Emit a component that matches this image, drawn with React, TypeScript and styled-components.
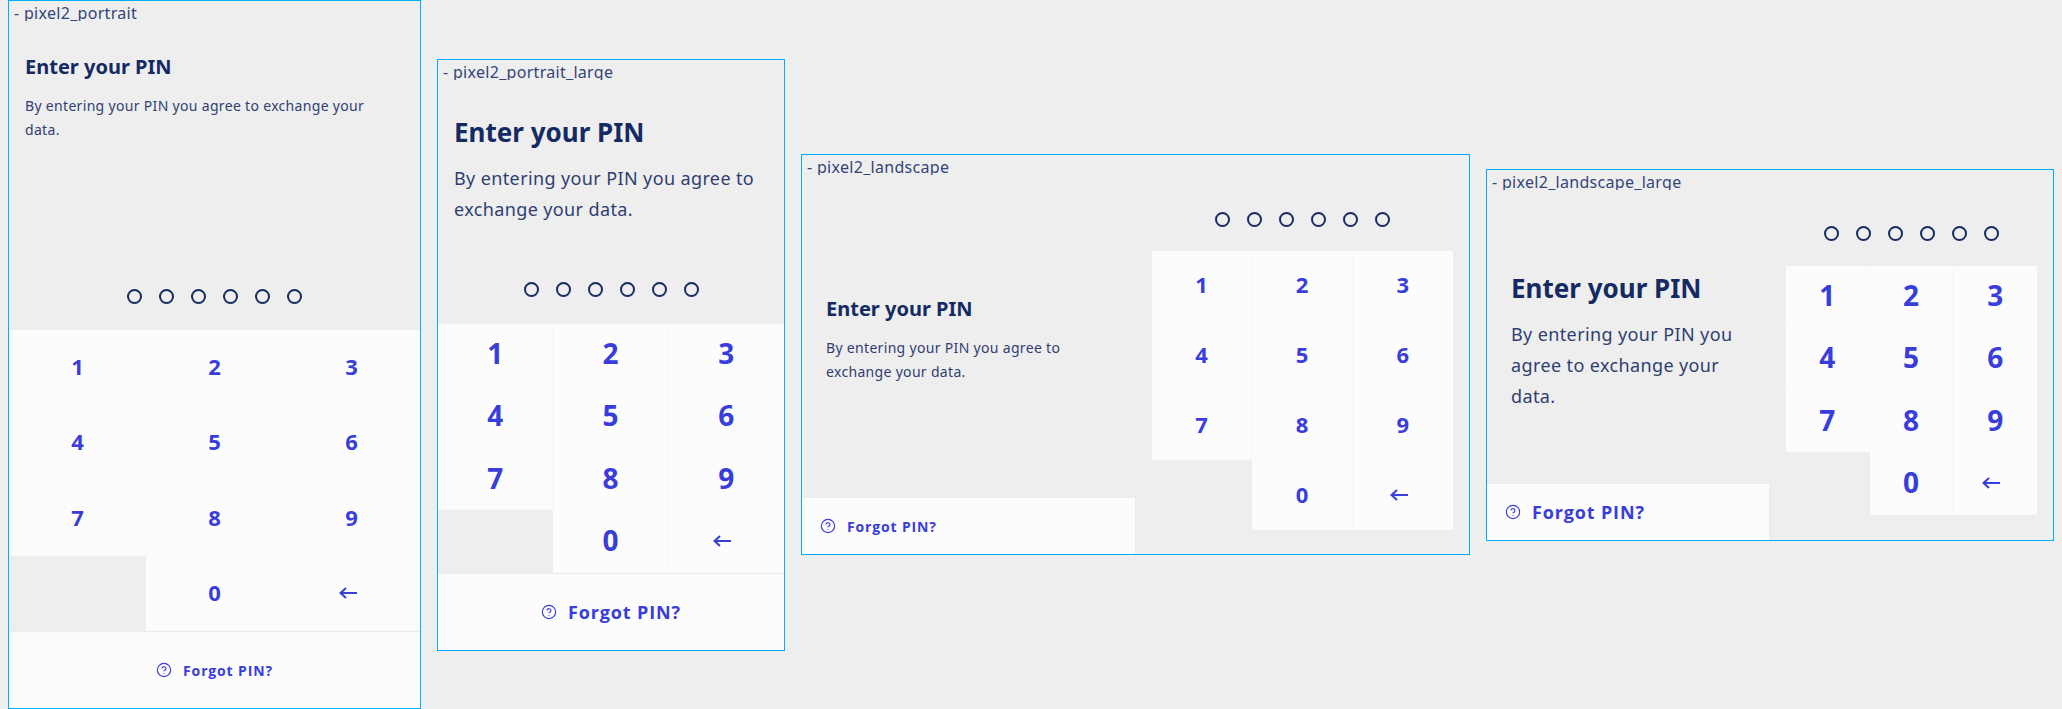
import React from 'react';
import styled, { createGlobalStyle } from 'styled-components';
import { CircleHelp } from 'lucide-react';

const GlobalStyle = createGlobalStyle`
  html, body { margin: 0; padding: 0; background: #eeeeee; }
  #root { width: 2062px; height: 709px; overflow: hidden; }
`;

const Page = styled.div`
  display: flex;
  align-items: center;
  gap: 16px;
  height: 709px;
  padding: 0 8px;
  box-sizing: border-box;
  font-family: "Noto Sans", "Open Sans", sans-serif;
`;

const Device = styled.section<{ $w: number; $h: number }>`
  width: ${(p) => p.$w}px;
  height: ${(p) => p.$h}px;
  flex: none;
  box-sizing: border-box;
  border: 1px solid #00b0ff;
  display: flex;
  flex-direction: column;
  overflow: hidden;
`;

const Label = styled.div`
  height: 20px;
  margin-bottom: -1px;
  flex: none;
  padding-left: 5px;
  overflow: hidden;
  font-size: 16px;
  line-height: 25px;
  font-weight: 400;
  letter-spacing: 0.3px;
  color: #33447a;
  white-space: nowrap;
`;

const Portrait = styled.div`
  flex: 1;
  min-height: 0;
  display: flex;
  flex-direction: column;
`;

const Landscape = styled.div`
  flex: 1;
  min-height: 0;
  margin-top: 4px;
  display: flex;
`;

const LeftColumn = styled.div<{ $w: number }>`
  width: ${(p) => p.$w}px;
  flex: none;
  display: flex;
  flex-direction: column;
  border-right: 1px solid #ebebef;
  box-sizing: border-box;
`;

const RightColumn = styled.div<{ $pad: number }>`
  flex: 1;
  display: flex;
  flex-direction: column;
  justify-content: flex-end;
  padding: 0 16px ${(p) => p.$pad}px 16px;
`;

const Intro = styled.div<{ $centered?: boolean; $large?: boolean; $top: number }>`
  flex: 1;
  display: flex;
  flex-direction: column;
  justify-content: ${(p) => (p.$centered ? 'center' : 'flex-start')};
  padding: ${(p) => p.$top}px ${(p) => (p.$large ? 17 : 40)}px 0 ${(p) => (p.$centered ? 24 : 16)}px;
`;

const Title = styled.h1<{ $large?: boolean }>`
  margin: 0 0 13px;
  font-size: ${(p) => (p.$large ? 26 : 20)}px;
  line-height: ${(p) => (p.$large ? 36 : 28)}px;
  font-weight: 700;
  color: #142a63;
`;

const Body = styled.p<{ $large?: boolean }>`
  margin: 0;
  font-size: ${(p) => (p.$large ? 18 : 14)}px;
  line-height: ${(p) => (p.$large ? 31 : 24)}px;
  letter-spacing: ${(p) => (p.$large ? 0.38 : 0.32)}px;
  color: #2e3f73;
`;

const Dots = styled.div<{ $gap: number }>`
  display: flex;
  justify-content: center;
  gap: 17px;
  margin-bottom: ${(p) => p.$gap}px;
  flex: none;
`;

const Dot = styled.span`
  width: 15px;
  height: 15px;
  box-sizing: border-box;
  border: 2px solid #172b65;
  border-radius: 50%;
`;

const Keypad = styled.div<{ $row: number }>`
  display: grid;
  grid-template-columns: repeat(3, 1fr);
  grid-auto-rows: ${(p) => p.$row}px;
  flex: none;
`;

const Key = styled.button<{ $large?: boolean; $vertical?: boolean; $arrow?: boolean }>`
  all: unset;
  box-sizing: border-box;
  display: flex;
  align-items: center;
  justify-content: center;
  background: #fcfcfd;
  border-bottom: 1px solid #f8f8f9;
  border-right: ${(p) => (p.$vertical ? '1px solid #f7f7f8' : 'none')};
  padding-right: ${(p) => (p.$arrow ? 8 : 0)}px;
  padding-bottom: ${(p) => (p.$arrow ? 0 : 2)}px;
  font-family: "Open Sans", "Noto Sans", sans-serif;
  font-size: ${(p) => (p.$large ? 28 : 22)}px;
  font-weight: 700;
  color: #383ddb;
`;

const Blank = styled.div``;

const ForgotBar = styled.div<{ $h: number; $left?: boolean }>`
  height: ${(p) => p.$h}px;
  flex: none;
  box-sizing: border-box;
  background: #fcfcfd;
  border-top: 1px solid #ebebeb;
  display: flex;
  align-items: center;
  justify-content: ${(p) => (p.$left ? 'flex-start' : 'center')};
  padding-left: ${(p) => (p.$left ? 18 : 0)}px;
  gap: 11px;
  color: #383ddb;
`;

const ForgotText = styled.span<{ $large?: boolean }>`
  font-family: "Open Sans", "Noto Sans", sans-serif;
  font-size: ${(p) => (p.$large ? 18 : 14)}px;
  font-weight: 700;
  letter-spacing: 0.85px;
`;

const BackArrow = () => (
  <svg width="18" height="12" viewBox="0 0 18 12" fill="none" stroke="currentColor" strokeWidth="2">
    <path d="M18 6H1.5M7 1 1.5 6 7 11" />
  </svg>
);

const keys = ['1', '2', '3', '4', '5', '6', '7', '8', '9', '', '0', 'back'];

const PinDots = ({ gap }: { gap: number }) => (
  <Dots $gap={gap}>
    {[0, 1, 2, 3, 4, 5].map((i) => (
      <Dot key={i} />
    ))}
  </Dots>
);

const PinPad = ({ row, large, vertical }: { row: number; large?: boolean; vertical?: boolean }) => (
  <Keypad $row={row}>
    {keys.map((k, i) =>
      k === '' ? (
        <Blank key={i} />
      ) : (
        <Key key={i} $large={large} $vertical={vertical && (i + 1) % 3 !== 0} $arrow={k === 'back'}>
          {k === 'back' ? <BackArrow /> : k}
        </Key>
      ),
    )}
  </Keypad>
);

const Forgot = ({ h, left, large }: { h: number; left?: boolean; large?: boolean }) => (
  <ForgotBar $h={h} $left={left}>
    <CircleHelp size={16} strokeWidth={1.7} />
    <ForgotText $large={large}>Forgot PIN?</ForgotText>
  </ForgotBar>
);

const Text = ({ large, centered, top }: { large?: boolean; centered?: boolean; top: number }) => (
  <Intro $centered={centered} $large={large} $top={top}>
    <Title $large={large}>Enter your PIN</Title>
    <Body $large={large}>By entering your PIN you agree to exchange your data.</Body>
  </Intro>
);

export default function App() {
  return (
    <>
      <GlobalStyle />
      <Page>
        <Device $w={413} $h={709}>
          <Label>- pixel2_portrait</Label>
          <Portrait>
            <Text top={33} />
            <PinDots gap={26} />
            <PinPad row={75.25} />
            <Forgot h={77} />
          </Portrait>
        </Device>
        <Device $w={348} $h={592}>
          <Label>- pixel2_portrait_large</Label>
          <Portrait>
            <Text top={35} large />
            <PinDots gap={27} />
            <PinPad row={62.25} large vertical />
            <Forgot h={77} large />
          </Portrait>
        </Device>
        <Device $w={669} $h={401}>
          <Label>- pixel2_landscape</Label>
          <Landscape>
            <LeftColumn $w={334}>
              <Text top={4} centered />
              <Forgot h={57} left />
            </LeftColumn>
            <RightColumn $pad={24}>
              <PinDots gap={24} />
              <PinPad row={69.75} vertical />
            </RightColumn>
          </Landscape>
        </Device>
        <Device $w={568} $h={372}>
          <Label>- pixel2_landscape_large</Label>
          <Landscape>
            <LeftColumn $w={283}>
              <Text top={6} centered large />
              <Forgot h={57} left large />
            </LeftColumn>
            <RightColumn $pad={25}>
              <PinDots gap={25} />
              <PinPad row={62.25} large vertical />
            </RightColumn>
          </Landscape>
        </Device>
      </Page>
    </>
  );
}
